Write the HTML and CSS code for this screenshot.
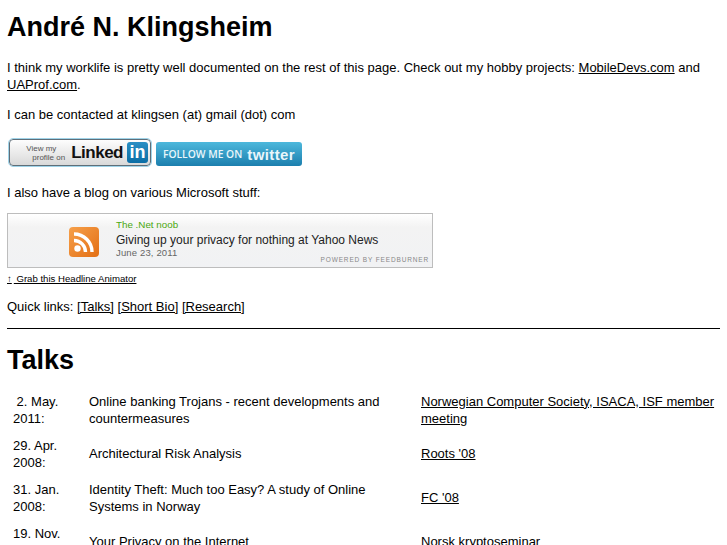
FILE: index.html
```html
<!DOCTYPE html>
<html lang="en">
<head>
<meta charset="utf-8">
<title>André N. Klingsheim</title>
<link rel="stylesheet" href="styles.css">
</head>
<body>
<h1 class="title">André N. Klingsheim</h1>
<p>I think my worklife is pretty well documented on the rest of this page. Check out my hobby projects: <a href="#">MobileDevs.com</a> and <a href="#">UAProf.com</a>.</p>
<p>I can be contacted at klingsen (at) gmail (dot) com</p>
<div class="badges">
  <a class="linkedin" href="#">
    <span class="li-view">View my<br><span class="li-view-2">profile on</span></span>
    <span class="li-name">Linked</span>
    <span class="li-in">in</span>
  </a>
  <a class="twitter" href="#">
    <span class="tw-follow">FOLLOW ME ON</span>
    <span class="tw-name">twitter</span>
  </a>
</div>
<p class="blog-intro">I also have a blog on various Microsoft stuff:</p>
<div class="feed">
  <div class="feed-icon">
    <svg width="30" height="30" viewBox="0 0 30 30">
      <defs>
        <linearGradient id="rss" x1="0" y1="0" x2="1" y2="1">
          <stop offset="0" stop-color="#f6a04a"/>
          <stop offset="1" stop-color="#e36f15"/>
        </linearGradient>
      </defs>
      <rect width="30" height="30" rx="4" fill="url(#rss)"/>
      <circle cx="8.500" cy="21.500" r="3.200" fill="#fff"/>
      <path d="M5 13.500a11.500 11.500 0 0 1 11.500 11.500" fill="none" stroke="#fff" stroke-width="3.400"/>
      <path d="M5 7a18 18 0 0 1 18 18" fill="none" stroke="#fff" stroke-width="3.400"/>
    </svg>
  </div>
  <div class="feed-text">
    <div class="feed-blog">The .Net noob</div>
    <div class="feed-post">Giving up your privacy for nothing at Yahoo News</div>
    <div class="feed-date">June 23, 2011</div>
  </div>
  <div class="feed-power">POWERED BY FEEDBURNER</div>
</div>
<div class="grab"><a href="#"><span class="grab-arrow">↑</span> Grab this Headline Animator</a></div>
<p class="quick">Quick links: <a href="#">[Talks]</a> <a href="#">[Short Bio]</a> <a href="#">[Research]</a></p>
<hr class="rule">
<h1 class="talks-title">Talks</h1>
<table class="talks">
  <tr><td class="date">&nbsp;2. May. 2011:</td><td class="name">Online banking Trojans - recent developments and countermeasures</td><td class="venue"><a href="#">Norwegian Computer Society, ISACA, ISF member meeting</a></td></tr>
  <tr><td class="date">29. Apr. 2008:</td><td class="name">Architectural Risk Analysis</td><td class="venue"><a href="#">Roots '08</a></td></tr>
  <tr><td class="date">31. Jan. 2008:</td><td class="name">Identity Theft: Much too Easy? A study of Online Systems in Norway</td><td class="venue"><a href="#">FC '08</a></td></tr>
  <tr><td class="date">19. Nov. 2007:</td><td class="name">Your Privacy on the Internet</td><td class="venue">Norsk kryptoseminar</td></tr>
</table>
</body>
</html>
```
FILE: styles.css
```css
html { overflow: hidden; height: 100%; }
body {
  margin: 0;
  padding: 0 7px;
  height: 100%;
  overflow: hidden;
  font-family: "Liberation Sans", Arial, sans-serif;
  font-size: 13px;
  line-height: 17px;
  color: #000;
  background: #fff;
}
a { color: #000; text-decoration: underline; }
p { margin: 0 0 13px; }
.title { margin: 11px 0 15px; font-size: 27px; line-height: 33px; font-weight: bold; }
.badges { display: flex; align-items: flex-end; gap: 5px; height: 30px; margin-bottom: 18px; }
.linkedin {
  box-sizing: border-box; width: 142px; height: 27px; margin-left: 2px;
  display: flex; align-items: center; justify-content: flex-end; gap: 4px;
  padding-right: 2px;
  border: 1px solid #5f6e78; border-radius: 4px; outline: 1px solid #9fd3e8;
  background: linear-gradient(#fdfdfd, #d9d9d9); text-decoration: none;
}
.li-view { font-size: 8px; line-height: 9px; color: #555; text-align: left; margin-right: 2px; white-space: nowrap; }
.li-view-2 { margin-left: 6px; }
.li-name { font-size: 17px; font-weight: bold; color: #111; letter-spacing: -0.500px; }
.li-in {
  width: 21px; height: 21px; border-radius: 3px; text-align: center;
  background: linear-gradient(#2a8fc4, #0b6ea6); color: #fff;
  font-size: 18px; line-height: 20px; font-weight: bold;
}
.twitter {
  box-sizing: border-box; width: 146px; height: 24px;
  display: flex; align-items: center; justify-content: center; gap: 5px;
  border-radius: 3px; background: linear-gradient(#4db8dc, #1c7fae);
  color: #e9f6fb; text-decoration: none;
}
.tw-follow { font-size: 10.300px; font-weight: 600; font-family: "Open Sans", sans-serif; white-space: nowrap; }
.tw-name { font-size: 15px; font-weight: bold; line-height: 17px; letter-spacing: 0.400px; }
.blog-intro { margin-bottom: 12px; }
.feed {
  position: relative; box-sizing: border-box; width: 426px; height: 55px;
  display: flex; border: 1px solid #bdbdbd;
  background: linear-gradient(#fff, #f3f3f3 25%, #f1f2f4);
}
.feed-icon { padding: 13px 0 0 61px; flex: none; display: flex; }
.feed-text { padding: 3px 0 0 17px; }
.feed-blog { font-size: 9.800px; line-height: 15px; color: #4aa80f; }
.feed-post { font-size: 12px; line-height: 16px; color: #222; }
.feed-date { font-size: 9.500px; line-height: 11px; margin-top: -1px; color: #666; letter-spacing: 0.150px; }
.feed-power { position: absolute; right: 3px; bottom: 3px; font-size: 6.500px; line-height: 9px; letter-spacing: 0.850px; color: #888; }
.grab { font-size: 9.600px; line-height: 12px; margin: 5px 0 13px; }
.grab-arrow { font-weight: bold; margin-right: 2px; }
.quick { margin-bottom: 13px; }
.rule { margin: 0; border: 0; border-top: 1px solid #000; }
.talks-title { margin: 15px 0 11px; font-size: 27px; line-height: 33px; font-weight: bold; }
.talks { border-collapse: separate; border-spacing: 0; width: 100%; table-layout: fixed; }
.talks td { padding: 4px 2px 5px 1px; vertical-align: middle; height: 35px; }
.talks .date { box-sizing: content-box; width: 73px; padding-left: 6px; }
.talks .name { width: 314px; padding-right: 17px; }
```
